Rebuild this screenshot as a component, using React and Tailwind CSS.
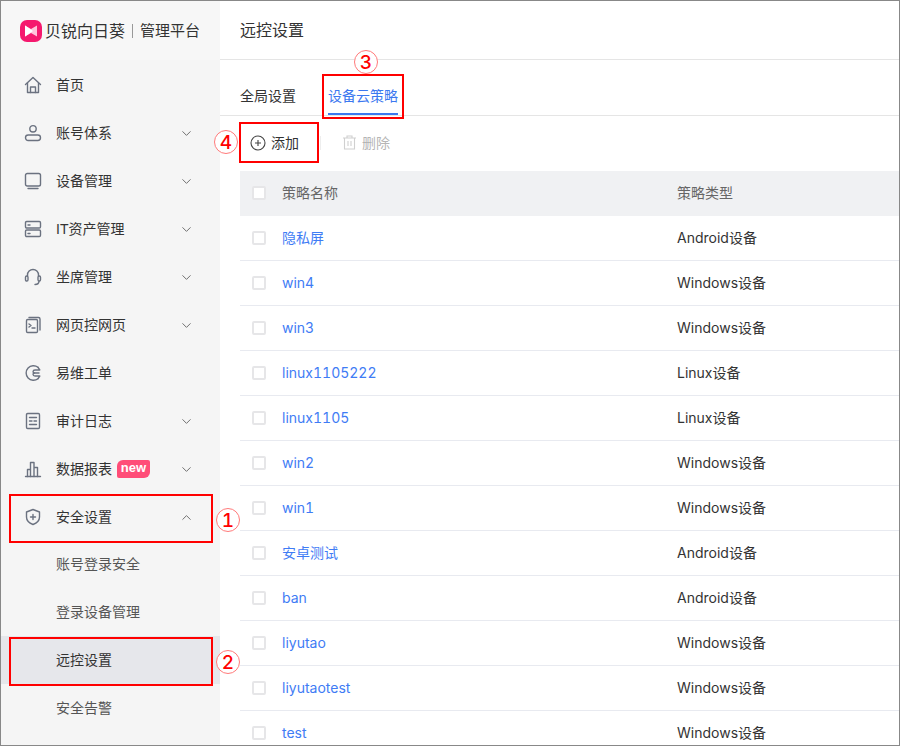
import { ChevronDown, ChevronUp } from 'lucide-react'

const stroke = { fill: 'none', stroke: '#6b7280', strokeWidth: 1.4, strokeLinecap: 'round', strokeLinejoin: 'round' }

const icons = {
  home: (
    <>
      <path d="M1.500 8.500 9 1.500l7.500 7" />
      <path d="M3.500 7v9.500h11V7" />
      <path d="M6.500 16.500V11h5v5.500" />
    </>
  ),
  user: (
    <>
      <circle cx="9" cy="4.800" r="3.200" />
      <rect x="1.500" y="11" width="15" height="5.500" rx="2.700" />
    </>
  ),
  monitor: (
    <>
      <rect x="1.500" y="1.500" width="15" height="12.500" rx="1.800" />
      <path d="M4 16.500h10" />
    </>
  ),
  server: (
    <>
      <rect x="1.500" y="1.500" width="15" height="6.500" rx="1.200" />
      <rect x="1.500" y="10" width="15" height="6.500" rx="1.200" />
      <path d="M4 5h2M4 13.500h2" />
    </>
  ),
  headset: (
    <>
      <path d="M3.500 8V7a5.500 5.500 0 0 1 11 0v1" />
      <rect x="1.500" y="8" width="2.500" height="5" rx="1.200" />
      <rect x="14" y="8" width="2.500" height="5" rx="1.200" />
      <path d="M15 13c0 2-1.500 3.500-4 3.500" />
    </>
  ),
  web: (
    <>
      <rect x="2.500" y="3.500" width="11" height="13" rx="1.200" />
      <path d="M5 1.500h9.500A1.500 1.500 0 0 1 16 3v11" />
      <path d="m5 8 2 1.500L5 11M8 12h3" />
    </>
  ),
  ticket: (
    <>
      <path d="M14 3.300A7.300 7.300 0 1 0 14 14.700" />
      <path d="M14 3.300 15.800 6H11C8.500 6 8.500 9 10.500 9 8.500 9 8.500 12 11 12h4.800L14 14.700" />
      <path d="M10.500 9h4.500" />
    </>
  ),
  log: (
    <>
      <rect x="2.500" y="1.500" width="13" height="15" rx="1.200" />
      <path d="M5.500 5.500h7M5.500 9h2.500M10 9h2.500M5.500 12.500h7" />
    </>
  ),
  chart: (
    <>
      <path d="M1.500 16.500h15" />
      <path d="M3.500 16.500v-7h3v7M6.500 16.500v-14h3.500v14M10 16.500v-9h3.500v9" />
    </>
  ),
  shield: (
    <>
      <path d="M9 1.500 15.500 4v5c0 3.500-2.500 6-6.500 7.500C5 15 2.500 12.500 2.500 9V4z" />
      <path d="M9 6.500v5M6.500 9h5" />
    </>
  ),
}

const menu = [
  { label: '首页', icon: 'home' },
  { label: '账号体系', icon: 'user', arrow: true },
  { label: '设备管理', icon: 'monitor', arrow: true },
  { label: 'IT资产管理', icon: 'server', arrow: true },
  { label: '坐席管理', icon: 'headset', arrow: true },
  { label: '网页控网页', icon: 'web', arrow: true },
  { label: '易维工单', icon: 'ticket' },
  { label: '审计日志', icon: 'log', arrow: true },
  { label: '数据报表', icon: 'chart', arrow: true, badge: true },
  { label: '安全设置', icon: 'shield', open: true },
]

const subMenu = ['账号登录安全', '登录设备管理', '远控设置', '安全告警']

const rows = [
  ['隐私屏', 'Android设备'],
  ['win4', 'Windows设备'],
  ['win3', 'Windows设备'],
  ['linux1105222', 'Linux设备'],
  ['linux1105', 'Linux设备'],
  ['win2', 'Windows设备'],
  ['win1', 'Windows设备'],
  ['安卓测试', 'Android设备'],
  ['ban', 'Android设备'],
  ['liyutao', 'Windows设备'],
  ['liyutaotest', 'Windows设备'],
  ['test', 'Windows设备'],
]

function NavIcon({ name }) {
  return (
    <svg width="18" height="18" viewBox="0 0 18 18" {...stroke}>
      {icons[name]}
    </svg>
  )
}

function Checkbox() {
  return <span className="w-[14px] h-[14px] rounded-[2px] border-2 border-[#e6e6e8] bg-white shrink-0" />
}

function Marker({ n, className }) {
  return (
    <span className={`absolute w-[24px] h-[24px] rounded-full border border-[#ff7a7a] bg-white text-[#f00] text-[19px] font-medium leading-none flex items-center justify-center ${className}`}>
      {n}
    </span>
  )
}

export default function App() {
  return (
    <div className="relative w-[900px] h-[746px] border border-[#888888] overflow-hidden flex bg-white text-sm text-[#333] tabular-nums font-['Inter','Noto_Sans_CJK_SC',sans-serif]">
      <aside className="w-[219px] shrink-0 bg-[#f5f5f5]">
        <div className="h-[59px] bg-[#f7f7f7] flex items-center pl-[19px]">
          <svg width="22" height="22" viewBox="0 0 22 22" className="shrink-0">
            <rect width="22" height="22" rx="7" fill="#f5196e" />
            <path d="M5 5.500 11 9l6-3.500v11L11 13l-6 3.500z" fill="#ffc4da" />
            <path d="M5 5.500 13 11l-8 5.500z" fill="#fff" />
          </svg>
          <span className="ml-[3px] text-base text-[#333] whitespace-nowrap">贝锐向日葵</span>
          <span className="w-px h-[14px] bg-[#999] mx-[7px]" />
          <span className="text-[15px] text-[#333] whitespace-nowrap">管理平台</span>
        </div>
        <nav className="pt-[1px]">
          {menu.map((m) => (
            <div key={m.label} className="h-[48px] flex items-center pl-[23px] pr-[26px]">
              <NavIcon name={m.icon} />
              <span className="ml-[14px] whitespace-nowrap font-['Liberation_Sans','Noto_Sans_CJK_SC',sans-serif]">{m.label}</span>
              {m.badge && (
                <span className="ml-[5px] h-[18px] w-[33px] bg-[#ff4d78] text-white text-[13px] font-bold leading-[16px] text-center font-['Liberation_Sans',sans-serif] rounded-tl-[6px] rounded-br-[6px] rounded-tr-[2px] rounded-bl-[2px]">
                  new
                </span>
              )}
              <span className="ml-auto">
                {m.arrow && <ChevronDown size={15} color="#666" strokeWidth={1.5} />}
                {m.open && <ChevronUp size={15} color="#666" strokeWidth={1.5} />}
              </span>
            </div>
          ))}
          <div className="-mt-[1px]">
            {subMenu.map((s) => (
              <div
                key={s}
                className={`h-[48px] flex items-center pl-[55px] ${s === '远控设置' ? 'bg-[#e6e7eb] text-[#333]' : 'text-[#555]'}`}
              >
                {s}
              </div>
            ))}
          </div>
        </nav>
      </aside>

      <main className="flex-1 min-w-0">
        <header className="h-[59px] border-b border-[#e5e5e5] pl-[20px] flex items-center text-base text-[#333]">
          远控设置
        </header>
        <div className="h-[56px] pl-[20px] border-b border-[#e5e5e5] flex items-end gap-[32px]">
          <span className="h-[38px] leading-[38px]">全局设置</span>
          <span className="h-[38px] leading-[38px] text-[#3b78f0] border-b-2 border-[#3b78f0]">设备云策略</span>
        </div>
        <div className="h-[55px] pl-[30px] pb-[2px] flex items-center">
          <svg width="16" height="16" viewBox="0 0 16 16" fill="none" stroke="#444" strokeWidth="1.100">
            <circle cx="8" cy="8" r="7" />
            <path d="M8 5v6M5 8h6" />
          </svg>
          <span className="ml-[5px] w-[28px]">添加</span>
          <span className="ml-[21px] w-px h-[14px] bg-[#eee]" />
          <svg className="ml-[21px]" width="15" height="15" viewBox="0 0 15 15" fill="none" stroke="#d0d0d0" strokeWidth="1.100">
            <path d="M1 3h13M5 3V1h5v2M2.500 3v11h10V3M6 6v5M9 6v5" />
          </svg>
          <span className="ml-[5px] text-[#b5b5b5]">删除</span>
        </div>
        <div className="ml-[20px]">
          <div className="h-[45px] bg-[#f0f1f3] flex items-center pl-[12px] text-[#666] border-b border-[#f0f1f3]">
            <Checkbox />
            <span className="ml-[16px] w-[395px]">策略名称</span>
            <span>策略类型</span>
          </div>
          {rows.map(([name, type]) => (
            <div key={name} className="h-[45px] flex items-center pl-[12px] border-b border-[#e8eaf0]">
              <Checkbox />
              <span className="ml-[16px] w-[395px] text-[#3f7cf5]">{name}</span>
              <span>{type}</span>
            </div>
          ))}
        </div>
      </main>

      <div className="absolute left-[8px] top-[493px] w-[204px] h-[49px] border-2 border-[#f00]" />
      <div className="absolute left-[8px] top-[636px] w-[204px] h-[49px] border-2 border-[#f00]" />
      <div className="absolute left-[321px] top-[73px] w-[82px] h-[45px] border-2 border-[#f00]" />
      <div className="absolute left-[238px] top-[121px] w-[80px] h-[41px] border-2 border-[#f00]" />
      <Marker n="1" className="left-[215px] top-[507px]" />
      <Marker n="2" className="left-[215px] top-[649px]" />
      <Marker n="3" className="left-[353px] top-[49px]" />
      <Marker n="4" className="left-[213px] top-[129px]" />
    </div>
  )
}
